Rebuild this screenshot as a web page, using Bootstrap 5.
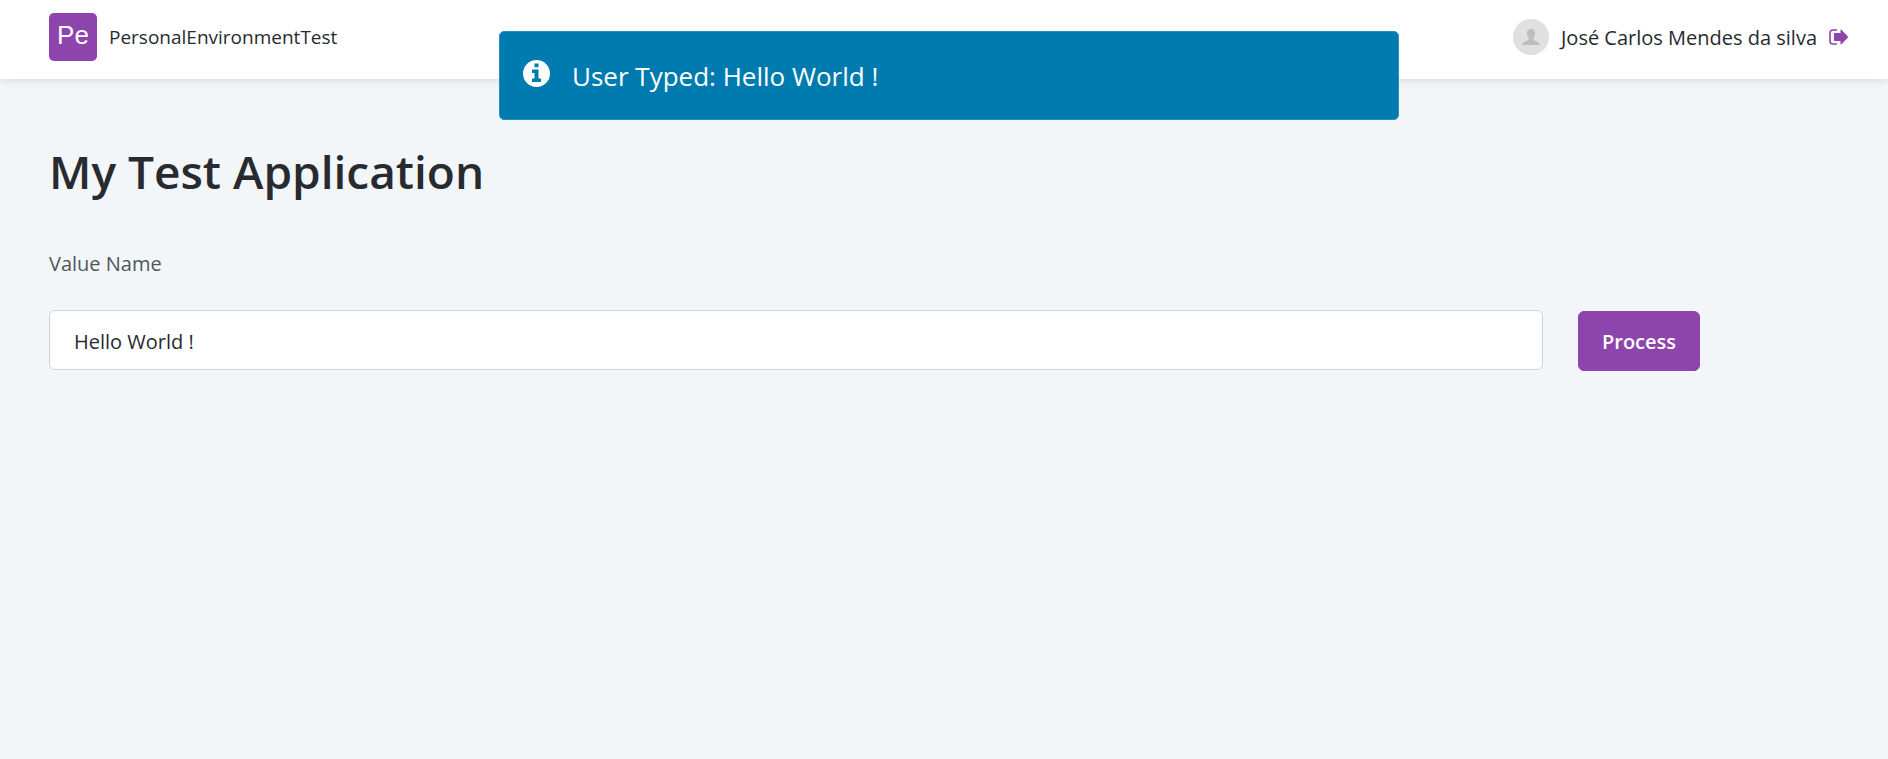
<!DOCTYPE html>
<html lang="en">
<head>
<meta charset="utf-8">
<meta name="viewport" content="width=device-width, initial-scale=1">
<title>My Test Application</title>
<link href="https://cdn.jsdelivr.net/npm/bootstrap@5.3.0/dist/css/bootstrap.min.css" rel="stylesheet">
<style>
  :root { --brand: #8e44ad; --ink: #272b30; }
  body { background: #f3f6f8; color: var(--ink); font-family: "Segoe UI", "Open Sans", sans-serif; font-size: 20px; line-height: 30px; }
  .app-header { background: #fff; box-shadow: 0 1px 8px rgba(0, 0, 0, .12); padding: 13px 39px 18px 49px; }
  .app-logo { width: 48px; height: 48px; border-radius: 5px; background: var(--brand); color: #fff; font: 26px/44px "Liberation Sans", sans-serif; text-align: center; }
  .app-link, .app-link:hover { color: inherit; }
  .app-name { font-size: 19px; }
  .user-name { padding-top: 1px; }
  .avatar { width: 36px; height: 36px; }
  .logout { color: var(--brand); }
  .app-main { padding: 56px 49px 48px; }
  .app-title { font-size: 46px; line-height: 72px; font-weight: 600; margin-bottom: 42px; }
  .field-label { color: #4f575e; margin-bottom: 31px; }
  .form-line { gap: 35px; padding-right: 139px; }
  .field-input, .field-input:focus { height: 60px; padding: 2px 24px 0; border: 1px solid #ced4da; border-radius: 6px; background: #fff; color: var(--ink); font-size: 20px; }
  .btn-process { --bs-btn-color: #fff; --bs-btn-bg: var(--brand); --bs-btn-border-color: var(--brand); --bs-btn-hover-color: #fff; --bs-btn-hover-bg: #7d3c98; width: 122px; height: 60px; padding: 2px 0 0; border-radius: 6px; font-size: 20px; font-weight: 600; margin-top: 1px; }
  .notice { top: 31px; left: calc(50% + 5px); width: 900px; max-width: 90%; min-height: 89px; padding: 0 23px; gap: 22px; border: 1px solid #2a8fbf; border-radius: 5px; background: #007bb0; color: #fff; font-size: 26px; z-index: 10; }
</style>
</head>
<body>
<header class="app-header d-flex align-items-center justify-content-between">
  <a class="app-link d-flex align-items-center text-decoration-none" href="#">
    <span class="app-logo me-2">Pe</span>
    <span class="app-name ms-1">PersonalEnvironmentTest</span>
  </a>
  <div class="d-flex align-items-center">
    <svg class="avatar me-2" viewBox="0 0 36 36" aria-hidden="true">
      <circle cx="18" cy="18" r="18" fill="#e0e0e0"/>
      <path fill="#bdbdbd" d="M18 10c3 0 4.500 2 4 5-.2 2-.8 3-1.500 4v2c0 .7 6.500 1.500 6.500 5H9c0-3.500 6.500-4.300 6.500-5v-2c-.7-1-1.300-2-1.500-4-.5-3 1-5 4-5z"/>
    </svg>
    <a class="app-link user-name text-decoration-none ms-1 me-2" href="#">José Carlos Mendes da silva</a>
    <a class="logout d-flex ms-1" href="#" aria-label="Log out">
      <svg width="20" height="16" viewBox="0 0 20 16" aria-hidden="true">
        <path d="M8 1H4a3 3 0 0 0-3 3v8a3 3 0 0 0 3 3h4" fill="none" stroke="currentColor" stroke-width="1.600"/>
        <path d="M5.500 4h6V1.300q0-1.300 1-.5l6.200 6.400q.6.800 0 1.600l-6.200 6.400q-1 .8-1-.5V12h-6q-.5 0-.5-.5v-7q0-.5.5-.5z" fill="currentColor"/>
      </svg>
    </a>
  </div>
</header>

<div class="notice position-absolute translate-middle-x d-flex align-items-center" role="status">
  <svg width="27" height="27" viewBox="0 0 27 27" class="mb-1" aria-hidden="true">
    <circle cx="13.500" cy="13.500" r="13.500" fill="#fff"/>
    <path fill="#007bb0" d="M11.500 3.500h4v3.700h-4zM9 9.500h6.500v9H18v3.500H9v-3.500h2.500V13H9z"/>
  </svg>
  <span>User Typed: Hello World !</span>
</div>

<main class="app-main">
  <h1 class="app-title">My Test Application</h1>
  <form>
    <label class="field-label d-block" for="valueName">Value Name</label>
    <div class="form-line d-flex">
      <input class="field-input form-control flex-grow-1" id="valueName" type="text" value="Hello World !">
      <button class="btn btn-process flex-shrink-0" type="button">Process</button>
    </div>
  </form>
</main>
<script src="https://cdn.jsdelivr.net/npm/bootstrap@5.3.0/dist/js/bootstrap.bundle.min.js"></script>
</body>
</html>
